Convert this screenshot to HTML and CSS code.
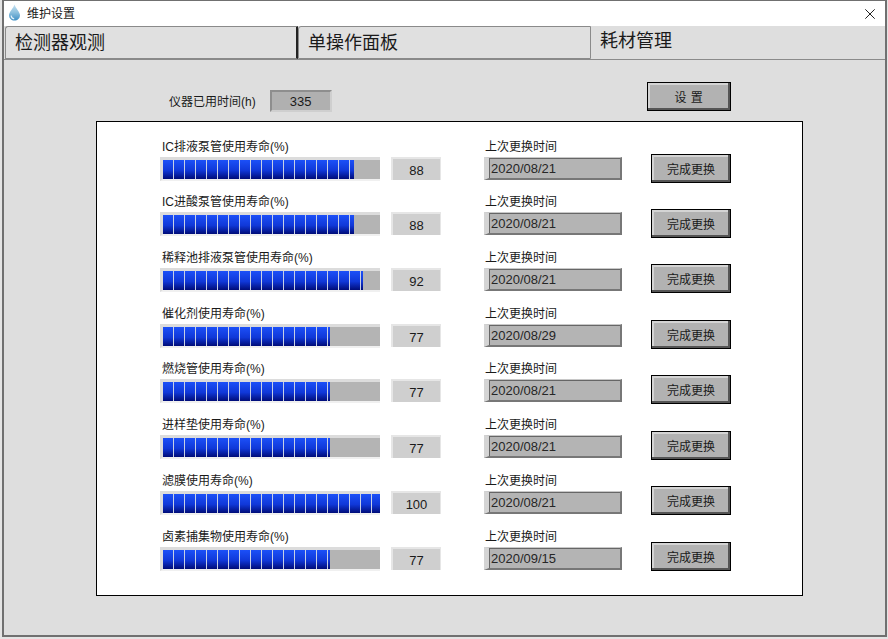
FILE: index.html
```html
<!DOCTYPE html>
<html lang="zh-CN">
<head>
<meta charset="utf-8">
<title>维护设置</title>
<link rel="stylesheet" href="styles.css">
</head>
<body>
<div class="window">
  <header class="titlebar">
    <svg class="app-icon" width="13" height="17" viewBox="0 0 13 17"><defs><linearGradient id="drop" x1="0" y1="0" x2="0" y2="1"><stop offset="0" stop-color="#c4e0f0"/><stop offset=".5" stop-color="#8cc0de"/><stop offset="1" stop-color="#3f8fc4"/></linearGradient></defs><path d="M6.500.5C5.600 4 1 8 1 11.200 1 14.300 3.500 16.500 6.500 16.500s5.500-2.200 5.500-5.300C12 8 7.400 4 6.500.5Z" fill="url(#drop)"/><path d="M3.200 11.500c0 1.800 1.200 3 3 3.300" stroke="#e4f2fa" stroke-width="1.200" fill="none"/></svg>
    <span class="title">维护设置</span>
    <svg class="close" width="10" height="10" viewBox="0 0 10 10"><path d="M.3.300l9.400 9.400M9.700.300l-9.400 9.400" stroke="#222" stroke-width="1" fill="none"/></svg>
  </header>
  <nav class="tabs">
    <div class="tab tab-first">检测器观测</div>
    <div class="tab">单操作面板</div>
    <div class="tab tab-active">耗材管理</div>
  </nav>
  <main class="panel">
    <div class="topbar">
      <span class="used-label">仪器已用时间(h)</span>
      <span class="used-value">335</span>
      <button class="btn btn-set">设 置</button>
    </div>
    <section class="card">
      <div class="row">
        <div class="label">IC排液泵管使用寿命(%)</div><div class="label date-label">上次更换时间</div>
        <div class="bar"><div class="fill" style="width:88%"></div></div><div class="value">88</div><div class="date">2020/08/21</div><button class="btn btn-row">完成更换</button>
      </div>
      <div class="row">
        <div class="label">IC进酸泵管使用寿命(%)</div><div class="label date-label">上次更换时间</div>
        <div class="bar"><div class="fill" style="width:88%"></div></div><div class="value">88</div><div class="date">2020/08/21</div><button class="btn btn-row">完成更换</button>
      </div>
      <div class="row">
        <div class="label">稀释池排液泵管使用寿命(%)</div><div class="label date-label">上次更换时间</div>
        <div class="bar"><div class="fill" style="width:92%"></div></div><div class="value">92</div><div class="date">2020/08/21</div><button class="btn btn-row">完成更换</button>
      </div>
      <div class="row">
        <div class="label">催化剂使用寿命(%)</div><div class="label date-label">上次更换时间</div>
        <div class="bar"><div class="fill" style="width:77%"></div></div><div class="value">77</div><div class="date">2020/08/29</div><button class="btn btn-row">完成更换</button>
      </div>
      <div class="row">
        <div class="label">燃烧管使用寿命(%)</div><div class="label date-label">上次更换时间</div>
        <div class="bar"><div class="fill" style="width:77%"></div></div><div class="value">77</div><div class="date">2020/08/21</div><button class="btn btn-row">完成更换</button>
      </div>
      <div class="row">
        <div class="label">进样垫使用寿命(%)</div><div class="label date-label">上次更换时间</div>
        <div class="bar"><div class="fill" style="width:77%"></div></div><div class="value">77</div><div class="date">2020/08/21</div><button class="btn btn-row">完成更换</button>
      </div>
      <div class="row">
        <div class="label">滤膜使用寿命(%)</div><div class="label date-label">上次更换时间</div>
        <div class="bar"><div class="fill" style="width:100%"></div></div><div class="value">100</div><div class="date">2020/08/21</div><button class="btn btn-row">完成更换</button>
      </div>
      <div class="row">
        <div class="label">卤素捕集物使用寿命(%)</div><div class="label date-label">上次更换时间</div>
        <div class="bar"><div class="fill" style="width:77%"></div></div><div class="value">77</div><div class="date">2020/09/15</div><button class="btn btn-row">完成更换</button>
      </div>
    </section>
  </main>
</div>
</body>
</html>
```
FILE: styles.css
```css
* { box-sizing: border-box; }
html, body { margin: 0; height: 100%; }
body {
  width: 888px;
  height: 639px;
  overflow: hidden;
  background: #e4e4e4;
  font-family: "Liberation Sans", "Noto Sans CJK SC", sans-serif;
  font-size: 12px;
  color: #1a1a1a;
}
.window {
  width: 885px;
  height: 637px;
  margin-left: 2px;
  border: solid #707070;
  border-width: 1px 2px 2px 2px;
  display: flex;
  flex-direction: column;
  background: #dedede;
}
.titlebar {
  height: 25px;
  flex: none;
  background: #fff;
  display: flex;
  align-items: center;
  padding: 0 10px 0 4px;
}
.app-icon { flex: none; margin-bottom: 3px; }
.title { margin: 0 0 3px 6px; font-size: 12px; }
.close { margin: 0 0 0 auto; }
.tabs {
  flex: none;
  height: 33px;
  display: flex;
  padding-left: 1px;
  align-items: stretch;
}
.tab {
  width: 293px;
  background: #e0e0e0;
  border: 1px solid #8a8a8a;
  border-top-left-radius: 3px;
  font-size: 18px;
  line-height: 31px;
  padding: 1px 0 0 9px;
}
.tab-first { border-right: 2px solid #222; }
.tab-active {
  background: transparent;
  border: 0;
  width: auto;
  padding: 0 0 0 9px;
  line-height: 31px;
}
.panel {
  flex: 1;
  border-top: 1px solid #8a8a8a;
  padding: 22px 0 0 92px;
  display: flex;
  flex-direction: column;
}
.topbar {
  display: flex;
  height: 39px;
  align-items: flex-start;
  padding-left: 73px;
}
.used-label { margin-top: 12px; line-height: 16px; }
.used-value {
  width: 62px;
  height: 22px;
  margin: 8px 0 0 14px;
  background: #b0b0b0;
  border: 2px solid #8e8e8e;
  border-right-color: #cfcfcf;
  border-bottom-color: #cfcfcf;
  font-size: 13px;
  line-height: 20px;
  text-align: center;
}
.btn {
  display: block;
  width: 80px;
  height: 29px;
  padding: 0;
  background: #b2b2b2;
  border: 1px solid #000;
  box-shadow: inset -2px -2px 0 #555, inset 2px 2px 0 #d4d4d4;
  font-family: inherit;
  font-size: 12px;
  color: #1a1a1a;
}
.btn-set { width: 84px; margin-left: 315px; word-spacing: 1px; }
.card {
  width: 707px;
  height: 475px;
  background: #fff;
  border: 1px solid #000;
  padding: 16.7px 0 0 63px;
  display: flex;
  flex-direction: column;
}
.row {
  height: 55.7px;
  flex: none;
  display: grid;
  grid-template-columns: 231px 93px 167px 80px;
  grid-template-rows: 17px 28px;
  align-content: start;
}
.label { grid-area: 1 / 1; line-height: 16px; padding-left: 2px; }
.date-label { grid-area: 1 / 3; padding-left: 1px; }
.bar {
  grid-area: 2 / 1;
  width: 220px;
  height: 24px;
  align-self: end;
  margin-bottom: 3px;
  background: #b4b4b4;
  border-top: 3px solid #dcdcdc;
  border-left: 3px solid #dcdcdc;
  border-bottom: 2px solid #f0f0f0;
}
.fill {
  height: 100%;
  background:
    repeating-linear-gradient(90deg, transparent 0 10px, #c8d0e4 10px 11px),
    linear-gradient(#1c50f8, #1038d8 55%, #000c78);
}
.value {
  grid-area: 2 / 2;
  width: 50px;
  height: 23px;
  align-self: end;
  margin-bottom: 4px;
  background: #cfcfcf;
  border-top: 2px solid #e6e6e6;
  border-left: 2px solid #e6e6e6;
  border-right: 1px solid #e6e6e6;
  font-size: 13px;
  line-height: 23px;
  text-align: center;
}
.date {
  grid-area: 2 / 3;
  width: 138px;
  height: 23px;
  align-self: end;
  margin-bottom: 4px;
  background: #b4b4b4;
  border-style: solid;
  border-width: 1px 2px 2px 5px;
  border-color: #c8c8c8 #777 #777 #d4d4d4;
  box-shadow: inset 1px 1px 0 #666;
  font-size: 13px;
  line-height: 21px;
  padding-left: 2px;
  color: #262626;
}
.btn-row { grid-area: 2 / 4; margin-top: -2px; }
.row:nth-child(n+3) .btn-row { margin-top: -3px; }
.row:nth-child(n+7) .btn-row { margin-top: -4px; }
```
